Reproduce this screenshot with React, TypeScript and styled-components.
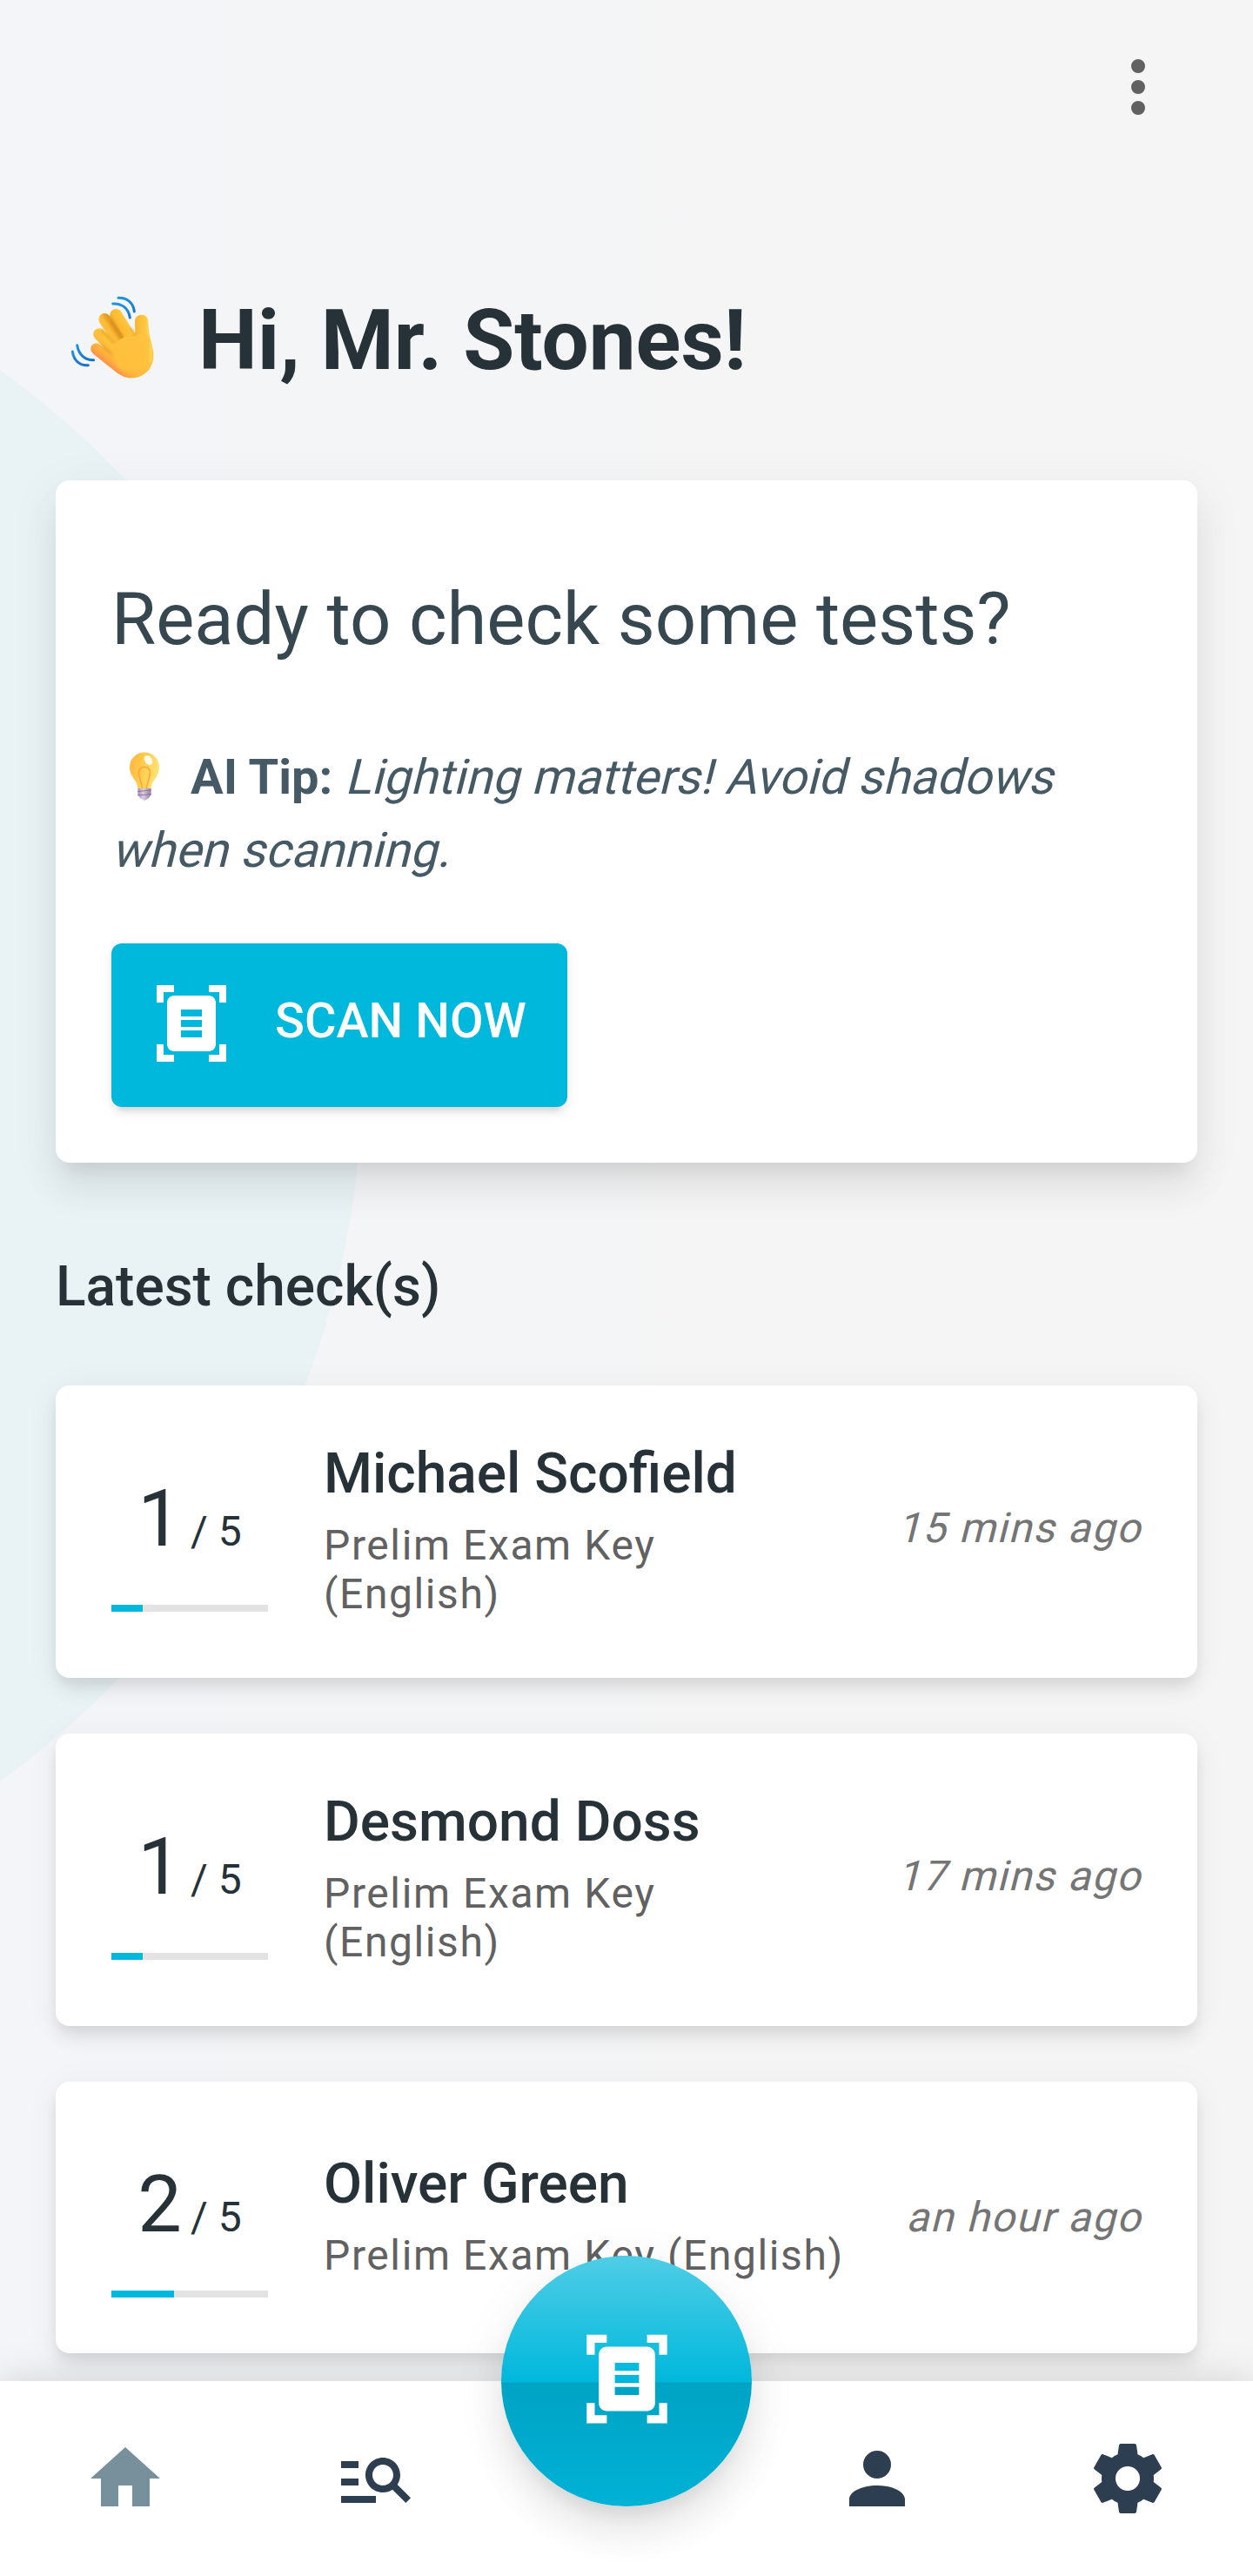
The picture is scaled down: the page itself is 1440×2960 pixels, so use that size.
import React from "react";
import styled, { createGlobalStyle } from "styled-components";

const GlobalStyle = createGlobalStyle`
  *, *::before, *::after { box-sizing: border-box; }
  html, body { margin: 0; padding: 0; }
  body { font-family: Roboto, "Noto Sans", sans-serif; }
  h1, h2, h3, p { margin: 0; font-weight: 400; }
  button { font-family: inherit; border: 0; padding: 0; cursor: pointer; }
`;

const elevation = {
  e2: "0 12px 4px -8px rgba(0,0,0,.075), 0 8px 8px 0 rgba(0,0,0,.05), 0 4px 20px 0 rgba(0,0,0,.05)",
  e4: "0 8px 16px -4px rgba(0,0,0,.075), 0 16px 20px 0 rgba(0,0,0,.05), 0 4px 40px 0 rgba(0,0,0,.05)",
  e8: "0 20px 20px -12px rgba(0,0,0,.075), 0 32px 40px 4px rgba(0,0,0,.05), 0 12px 56px 8px rgba(0,0,0,.045)",
  fab: "0 20px 20px -12px rgba(0,0,0,.09), 0 32px 40px 4px rgba(0,0,0,.06), 0 12px 56px 8px rgba(0,0,0,.05)",
  nav: "0 0 44px rgba(0,0,0,.15)",
};

const Screen = styled.div`
  position: relative;
  display: flex;
  flex-direction: column;
  width: 1440px;
  height: 2960px;
  overflow: hidden;
  background:
    radial-gradient(circle at -582px 1236px, #e9f2f5 0, #e9f2f5 997.5px, rgba(233,242,245,0) 998.5px),
    linear-gradient(90deg, #f4f5f8 0%, #f5f5f5 80%);
`;

const TopBar = styled.header`
  display: flex;
  justify-content: flex-end;
  height: 336px;
  padding: 52px 84px 0 0;
`;

const IconButton = styled.button`
  width: 96px;
  height: 96px;
  background: none;
  color: #616161;
`;

const Icon = styled.svg<{ $size?: number }>`
  display: block;
  flex: none;
  width: ${(p) => p.$size ?? 96}px;
  height: ${(p) => p.$size ?? 96}px;
  fill: currentColor;
`;

const Greeting = styled.div`
  display: flex;
  height: 216px;
  padding: 2px 0 0 80px;
`;

const GreetingText = styled.h1`
  margin-left: 48px;
  font-size: 96px;
  line-height: 106px;
  font-weight: 700;
  color: #263238;
`;

const Main = styled.main`
  display: flex;
  flex-direction: column;
  flex: 1;
  padding: 0 64px;
  min-height: 0;
`;

const HeroCard = styled.section`
  flex: none;
  height: 784px;
  padding: 103px 64px 0;
  border-radius: 16px;
  background: #fff;
  box-shadow: ${elevation.e8};
`;

const HeroTitle = styled.h2`
  font-size: 83.2px;
  line-height: 114px;
  color: #37474f;
`;

const Tip = styled.p`
  margin-top: 82px;
  font-size: 56px;
  line-height: 84px;
  color: #455a64;

  strong { font-weight: 700; }
`;

const Slanted = styled.span`
  display: inline-block;
  transform: skewX(-14deg);
  transform-origin: 0 61px;
`;

const BulbSvg = styled.svg`
  display: inline-block;
  width: 36px;
  height: 56px;
  margin: 0 35px 0 20px;
  vertical-align: -8px;
`;

const ScanButton = styled.button`
  display: flex;
  align-items: center;
  width: 524px;
  height: 188px;
  margin-top: 65px;
  padding: 0 0 4px 44px;
  border-radius: 12px;
  background: #00b8dc;
  color: #fff;
  box-shadow: ${elevation.e2};
`;

const ScanLabel = styled.span`
  margin: 0 0 6px 48px;
  font-size: 56px;
  line-height: 64px;
  font-weight: 500;
`;

const SectionTitle = styled.h3`
  flex: none;
  margin: 103px 0 73px;
  font-size: 64px;
  line-height: 80px;
  font-weight: 500;
  color: #263238;
`;

const CheckList = styled.div`
  display: flex;
  flex-direction: column;
  gap: 64px;
`;

const CheckCard = styled.article<{ $compact?: boolean }>`
  display: flex;
  align-items: center;
  flex: none;
  height: ${(p) => (p.$compact ? 312 : 336)}px;
  padding: 0 64px;
  border-radius: 16px;
  background: #fff;
  box-shadow: ${elevation.e4};
`;

const ScoreColumn = styled.div`
  width: 180px;
  padding-top: 25px;
`;

const Score = styled.div`
  height: 106px;
  font-size: 90px;
  line-height: 106px;
  text-align: center;
  color: #263238;

  small { font-size: 48px; line-height: 1; margin-left: 10px; }
`;

const Track = styled.div`
  height: 8px;
  margin-top: 45px;
  background: #e3e3e3;
`;

const Fill = styled.div`
  height: 100%;
  background: #00b8dc;
`;

const Details = styled.div`
  flex: 1;
  margin-left: 64px;
`;

const Student = styled.div`
  font-size: 64px;
  line-height: 68px;
  font-weight: 500;
  color: #263238;
`;

const Exam = styled.div`
  margin-top: 20px;
  font-size: 48px;
  line-height: 56px;
  letter-spacing: 1.6px;
  color: #616161;
  white-space: pre;
`;

const Ago = styled.time<{ $compact?: boolean }>`
  margin-top: ${(p) => (p.$compact ? -1 : -8)}px;
  font-size: 48px;
  line-height: 56px;
  letter-spacing: 1.6px;
  color: #757575;
  transform: skewX(-14deg);
  transform-origin: 0 44px;
`;

const BottomNav = styled.nav`
  position: absolute;
  inset: auto 0 0 0;
  display: grid;
  grid-template-columns: repeat(5, 1fr);
  align-items: center;
  justify-items: center;
  height: 224px;
  background: #fff;
  box-shadow: ${elevation.nav};
`;

const NavItem = styled.button<{ $active?: boolean }>`
  background: none;
  color: ${(p) => (p.$active ? "#78909c" : "#2c3e50")};
`;

const Fab = styled.button`
  display: flex;
  align-items: center;
  justify-content: center;
  width: 288px;
  height: 288px;
  padding-bottom: 6px;
  margin-top: -224px;
  border-radius: 50%;
  color: #fff;
  background: linear-gradient(180deg, #50cde6 0%, #00b8dc 50.2%, #00a3c4 50.8%, #00b2d6 100%);
  box-shadow: ${elevation.fab};
`;

const paths = {
  dots: "M12,16A2,2 0 0,1 14,18A2,2 0 0,1 12,20A2,2 0 0,1 10,18A2,2 0 0,1 12,16M12,10A2,2 0 0,1 14,12A2,2 0 0,1 12,14A2,2 0 0,1 10,12A2,2 0 0,1 12,10M12,4A2,2 0 0,1 14,6A2,2 0 0,1 12,8A2,2 0 0,1 10,6A2,2 0 0,1 12,4Z",
  home: "M10,20V14H14V20H19V12H22L12,3L2,12H5V20H10Z",
  search:
    "M7 9H2V7h5v2zm0 3H2v2h5v-2zm13.59 7l-3.83-3.83c-.8.52-1.74.83-2.76.83-2.76 0-5-2.24-5-5s2.24-5 5-5 5 2.24 5 5c0 1.02-.31 1.96-.83 2.75L22 17.59 20.59 19zM17 11c0-1.66-1.34-3-3-3s-3 1.34-3 3 1.34 3 3 3 3-1.34 3-3zM2 19h10v-2H2v2z",
  account:
    "M12,4A4,4 0 0,1 16,8A4,4 0 0,1 12,12A4,4 0 0,1 8,8A4,4 0 0,1 12,4M12,14C16.42,14 20,15.79 20,18V20H4V18C4,15.79 7.58,14 12,14Z",
  cog: "M12,15.5A3.5,3.5 0 0,1 8.5,12A3.5,3.5 0 0,1 12,8.5A3.5,3.5 0 0,1 15.5,12A3.5,3.5 0 0,1 12,15.5M19.43,12.97C19.47,12.65 19.5,12.33 19.5,12C19.5,11.67 19.47,11.34 19.43,11L21.54,9.37C21.73,9.22 21.78,8.95 21.66,8.73L19.66,5.27C19.54,5.05 19.27,4.96 19.05,5.05L16.56,6.05C16.04,5.66 15.5,5.32 14.87,5.07L14.5,2.42C14.46,2.18 14.25,2 14,2H10C9.75,2 9.54,2.18 9.5,2.42L9.13,5.07C8.5,5.32 7.96,5.66 7.44,6.05L4.95,5.05C4.73,4.96 4.46,5.05 4.34,5.27L2.34,8.73C2.21,8.95 2.27,9.22 2.46,9.37L4.57,11C4.53,11.34 4.5,11.67 4.5,12C4.5,12.33 4.53,12.65 4.57,12.97L2.46,14.63C2.27,14.78 2.21,15.05 2.34,15.27L4.34,18.73C4.46,18.95 4.73,19.03 4.95,18.95L7.44,17.94C7.96,18.34 8.5,18.68 9.13,18.93L9.5,21.58C9.54,21.82 9.75,22 10,22H14C14.25,22 14.46,21.82 14.5,21.58L14.87,18.93C15.5,18.67 16.04,18.34 16.56,17.94L19.05,18.95C19.27,19.03 19.54,18.95 19.66,18.73L21.66,15.27C21.78,15.05 21.73,14.78 21.54,14.63L19.43,12.97Z",
  scan: "M7,3H4v3H2V1h5V3z M22,6V1h-5v2h3v3H22z M7,21H4v-3H2v5h5V21z M20,18v3h-3v2h5v-5H20z M19,18c0,1.1-0.9,2-2,2H7c-1.1,0-2-0.9-2-2V6c0-1.1,0.9-2,2-2h10c1.1,0,2,0.9,2,2V18z M15,8H9v2h6V8z M15,11H9v2h6V11z M15,14H9v2h6V14z",
};

const Glyph = ({ name, size }: { name: keyof typeof paths; size?: number }) => (
  <Icon viewBox="0 0 24 24" $size={size} aria-hidden="true">
    <path d={paths[name]} />
  </Icon>
);

const WavingHand = () => (
  <Icon viewBox="0 0 300 300" $size={100} aria-hidden="true">
    <defs>
      <linearGradient id="skin" gradientUnits="userSpaceOnUse" x1="130" y1="255" x2="205" y2="165">
        <stop offset="0" stopColor="#f98a4b" />
        <stop offset="0.28" stopColor="#ffb03c" />
        <stop offset="0.6" stopColor="#ffbe3e" />
        <stop offset="1" stopColor="#ffc340" />
      </linearGradient>
      <linearGradient id="finger" gradientUnits="userSpaceOnUse" x1="108" y1="120" x2="142" y2="98">
        <stop offset="0" stopColor="#ffc53f" />
        <stop offset="0.6" stopColor="#fdba37" />
        <stop offset="1" stopColor="#e39c24" />
      </linearGradient>
      <linearGradient id="index" gradientUnits="userSpaceOnUse" x1="148" y1="98" x2="190" y2="74">
        <stop offset="0" stopColor="#e8a126" />
        <stop offset="0.3" stopColor="#fdb932" />
        <stop offset="1" stopColor="#ffc940" />
      </linearGradient>
      <linearGradient id="ring" gradientUnits="userSpaceOnUse" x1="85" y1="155" x2="118" y2="128">
        <stop offset="0" stopColor="#ffb93c" />
        <stop offset="1" stopColor="#ffc63e" />
      </linearGradient>
      <linearGradient id="thumb" gradientUnits="userSpaceOnUse" x1="226" y1="0" x2="290" y2="0">
        <stop offset="0" stopColor="#f9b52f" />
        <stop offset="0.5" stopColor="#ffc741" />
        <stop offset="1" stopColor="#ffe05a" />
      </linearGradient>
      <linearGradient id="motion" x1="0" y1="0" x2="0" y2="1">
        <stop offset="0" stopColor="#1f93e0" />
        <stop offset="1" stopColor="#1c75c4" />
      </linearGradient>
      <filter id="soft" x="-20%" y="-20%" width="140%" height="140%">
        <feGaussianBlur stdDeviation="4" />
      </filter>
    </defs>
    <g fill="none" strokeLinecap="round">
      <path d="M160 72L212 155" stroke="url(#index)" strokeWidth="42" />
      <path d="M121 87L180 175" stroke="url(#finger)" strokeWidth="42" />
      <path d="M102 138L170 210" stroke="url(#ring)" strokeWidth="41" />
    </g>
    <path
      fill="url(#thumb)"
      d="M226 132L225 94C225 80 235 71 248 71C262 71 271 81 271 96C272 120 274 135 280 160L289 205L240 230L195 160Z"
    />
    <path
      fill="url(#skin)"
      d="M73 187C74 172 90 164 104 174L148 208C150 190 160 160 185 150C205 141 222 150 234 140C256 128 272 140 279 160C286 182 290 200 289 218C286 260 254 289 212 289C192 289 176 281 158 267L82 206C76 201 72 195 73 187Z"
    />
    <g fill="none" stroke="#c77b12" strokeWidth="5" strokeLinecap="round" opacity="0.6" filter="url(#soft)">
      <path d="M142 92L178 146" />
      <path d="M112 125L154 170" />
      <path d="M108 173L146 205" />
      <path d="M212 118L223 134" />
    </g>
    <ellipse cx="208" cy="210" rx="56" ry="58" fill="#ffc03d" filter="url(#soft)" />
    <path d="M276 165Q287 205 277 235" fill="none" stroke="#ffd955" strokeWidth="10" filter="url(#soft)" />
    <g fill="none" stroke="url(#motion)" strokeWidth="9" strokeLinecap="round">
      <path d="M168 13C199 12 220 30 223 60" />
      <path d="M149 33C182 32 203 50 208 81" />
      <path d="M26 176C31 208 53 228 83 227" />
      <path d="M10 198C14 228 34 247 64 245" />
    </g>
  </Icon>
);

const Bulb = () => (
  <BulbSvg viewBox="0 0 36 56" aria-hidden="true">
    <defs>
      <linearGradient id="glass" x1="0" y1="0.3" x2="1" y2="0.6">
        <stop offset="0" stopColor="#ffb73d" />
        <stop offset="0.5" stopColor="#ffcf52" />
        <stop offset="1" stopColor="#ffe377" />
      </linearGradient>
      <linearGradient id="base" x1="0" y1="0" x2="1" y2="0">
        <stop offset="0" stopColor="#a28cb0" />
        <stop offset="0.4" stopColor="#dccfe2" />
        <stop offset="1" stopColor="#9378a8" />
      </linearGradient>
    </defs>
    <path fill="url(#base)" d="M10.500 41H25.500V49L23 53L18 56L13 53L10.500 49Z" />
    <path d="M10 45.500L26 44M10 50L26 48.500" stroke="#8d76a0" strokeWidth="1" />
    <path fill="url(#glass)" d="M18 0.500C27.500 0.500 35 8 35 18C35 29 26 32 25.500 42H10.500C10 32 1 29 1 18C1 8 8.500 0.500 18 0.500Z" />
    <path d="M15.500 42C15 34 11.500 30 11.500 24C11.500 15 24.500 15 24.500 24C24.500 30 21 34 20.500 42" fill="none" stroke="#fca63a" strokeWidth="1.600" />
    <ellipse cx="22.500" cy="9.500" rx="4.200" ry="6" transform="rotate(-35 22.500 9.500)" fill="#fff" opacity="0.85" />
  </BulbSvg>
);

type Check = { name: string; exam: string; score: number; total: number; ago: string; compact?: boolean };

const checks: Check[] = [
  { name: "Michael Scofield", exam: "Prelim Exam Key\n(English)", score: 1, total: 5, ago: "15 mins ago" },
  { name: "Desmond Doss", exam: "Prelim Exam Key\n(English)", score: 1, total: 5, ago: "17 mins ago" },
  { name: "Oliver Green", exam: "Prelim Exam Key (English)", score: 2, total: 5, ago: "an hour ago", compact: true },
];

export default function App() {
  return (
    <>
      <GlobalStyle />
      <Screen>
        <TopBar>
          <IconButton aria-label="More options">
            <Glyph name="dots" />
          </IconButton>
        </TopBar>
        <Greeting>
          <WavingHand />
          <GreetingText>Hi, Mr. Stones!</GreetingText>
        </Greeting>
        <Main>
          <HeroCard>
            <HeroTitle>Ready to check some tests?</HeroTitle>
            <Tip>
              <Bulb />
              <strong>AI Tip:</strong> <Slanted>Lighting matters! Avoid shadows</Slanted>
              <br />
              <Slanted>when scanning.</Slanted>
            </Tip>
            <ScanButton>
              <Glyph name="scan" />
              <ScanLabel>SCAN NOW</ScanLabel>
            </ScanButton>
          </HeroCard>
          <SectionTitle>Latest check(s)</SectionTitle>
          <CheckList>
            {checks.map((c) => (
              <CheckCard key={c.name} $compact={c.compact}>
                <ScoreColumn>
                  <Score>
                    {c.score}
                    <small>/ {c.total}</small>
                  </Score>
                  <Track>
                    <Fill style={{ width: `${(c.score / c.total) * 100}%` }} />
                  </Track>
                </ScoreColumn>
                <Details>
                  <Student>{c.name}</Student>
                  <Exam>{c.exam}</Exam>
                </Details>
                <Ago $compact={c.compact}>{c.ago}</Ago>
              </CheckCard>
            ))}
          </CheckList>
        </Main>
        <BottomNav>
          <NavItem $active aria-label="Home">
            <Glyph name="home" />
          </NavItem>
          <NavItem aria-label="Results">
            <Glyph name="search" />
          </NavItem>
          <Fab aria-label="Scan">
            <Glyph name="scan" size={111} />
          </Fab>
          <NavItem aria-label="Profile">
            <Glyph name="account" />
          </NavItem>
          <NavItem aria-label="Settings">
            <Glyph name="cog" />
          </NavItem>
        </BottomNav>
      </Screen>
    </>
  );
}
